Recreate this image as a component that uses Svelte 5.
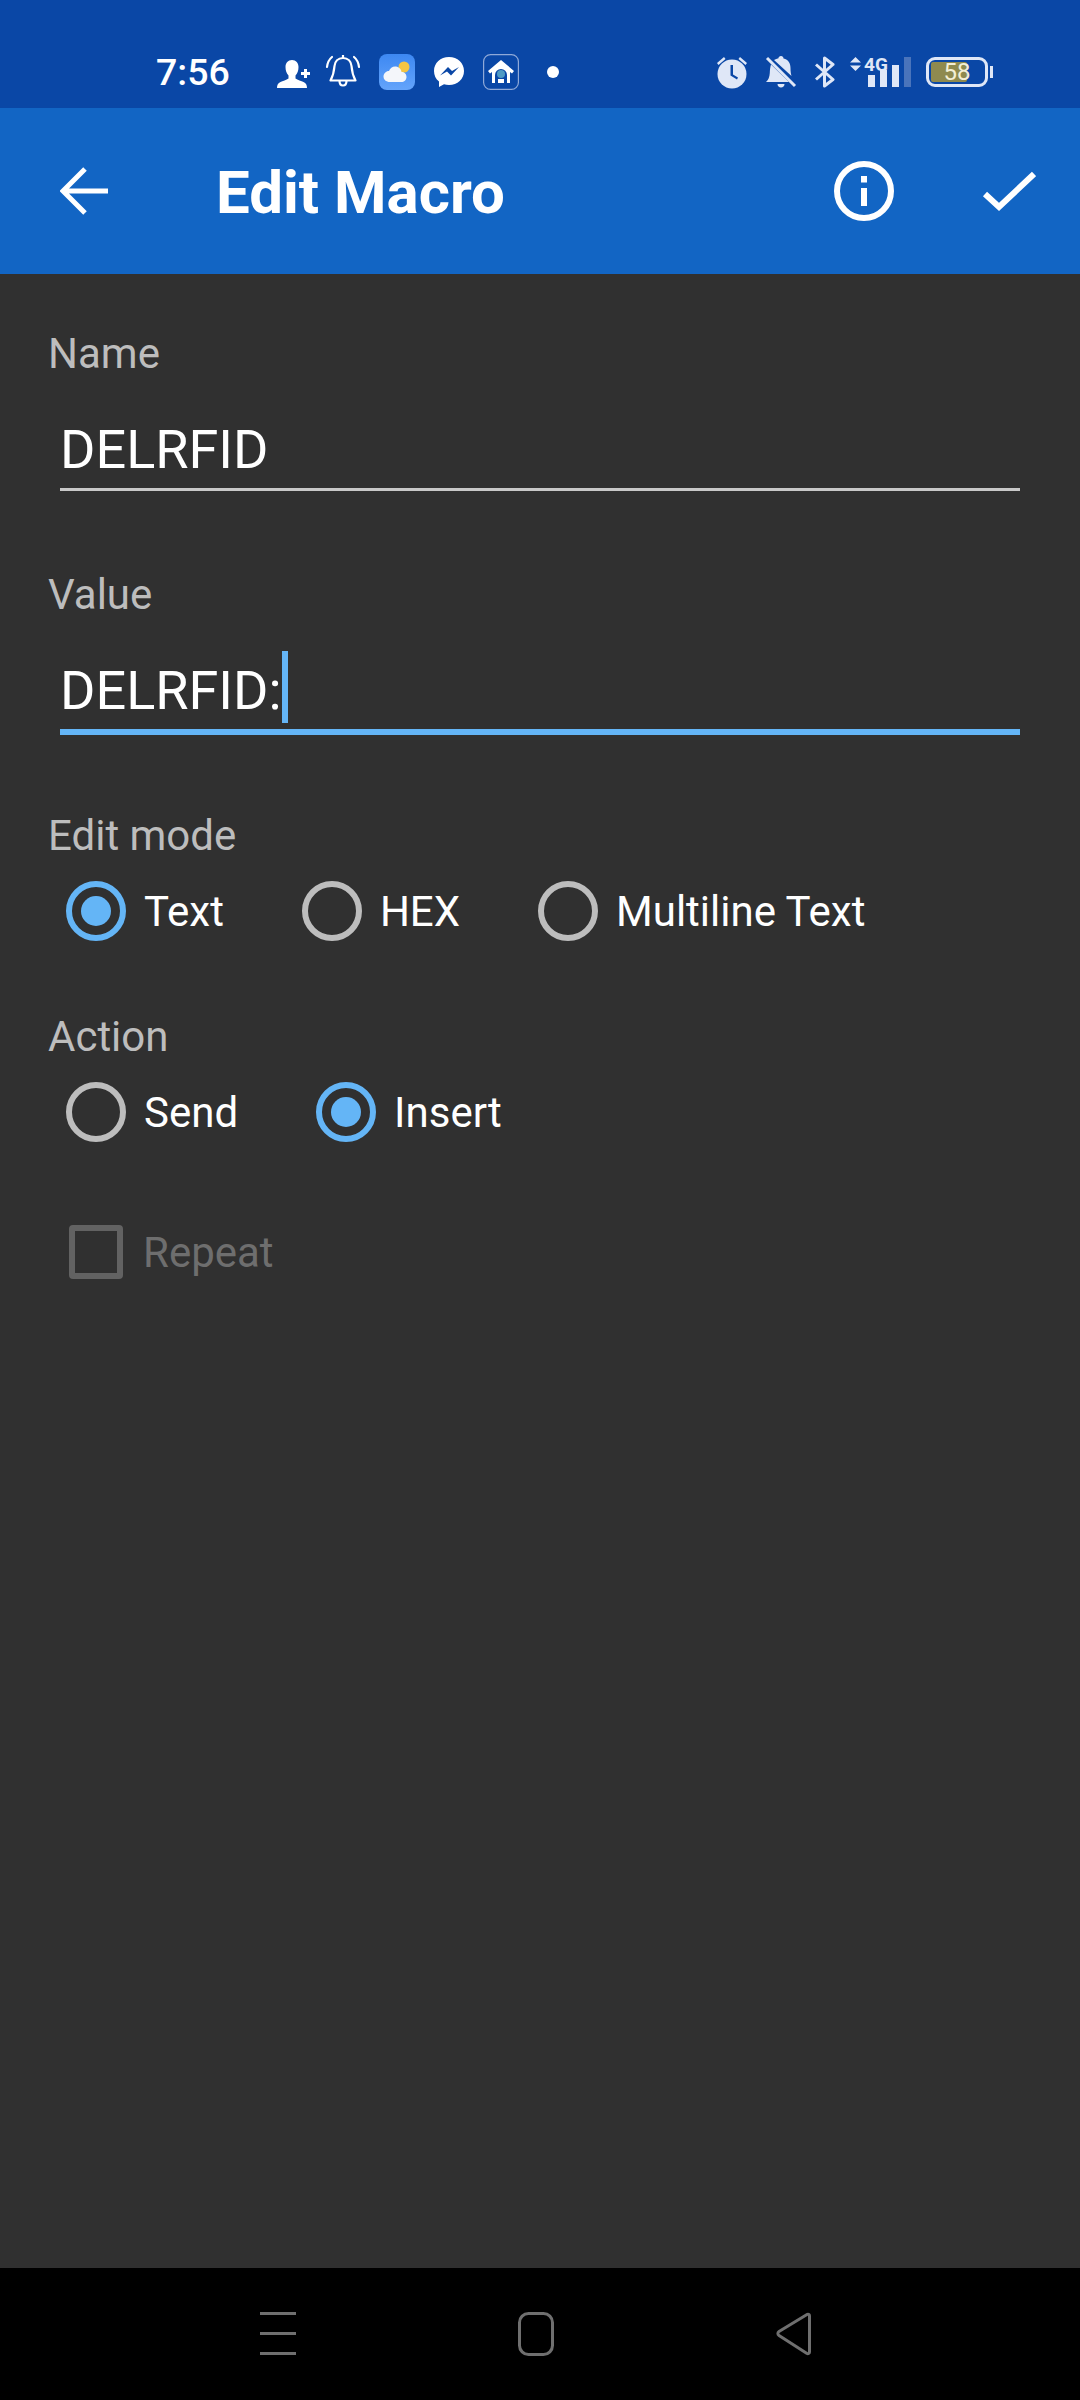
<script>
  const editModes = ['Text', 'HEX', 'Multiline Text'];
  const actions = ['Send', 'Insert'];
  let mode = 'Text';
  let action = 'Insert';
  let name = 'DELRFID';
  let value = 'DELRFID:';
</script>

<div class="screen">
  <div class="status">
    <span class="time">7:56</span>
    <div class="notifs">
      <svg class="person" width="34" height="30" viewBox="0 0 34 30" fill="#fff">
        <path d="M15 1c4 0 6.500 3 6.500 7 0 3.500-1 6.500-3 8.500v3c2 1.500 6 2.500 8 3.500 2.500 1 3.500 3 3.500 6H0c0-3 1-5 3.500-6 2-1 6-2 8-3.500v-3c-2-2-3-5-3-8.500 0-4 2.500-7 6.500-7z" />
        <rect x="27" y="10" width="3" height="9" />
        <rect x="24" y="13" width="9" height="3" />
      </svg>
      <svg class="bell" width="36" height="36" viewBox="0 0 36 36" fill="none" stroke="#fff" stroke-width="2.200">
        <path d="M18 1v3M18 4c-5 0-8 3.500-8.500 8-.4 5-1 9-4 14.500h25c-3-5.500-3.600-9.500-4-14.500C26 7.500 23 4 18 4zM14.500 27c0 6 7 6 7 0" stroke-linejoin="round" />
        <path d="M7 3C4 5.500 2.500 8.500 2 13M29 3c3 2.500 4.500 5.500 5 10" stroke-linecap="round" />
      </svg>
      <svg class="weather" width="36" height="36" viewBox="0 0 36 36">
        <defs>
          <linearGradient id="sky" x1="0" y1="0" x2="0" y2="1">
            <stop offset="0" stop-color="#3d88f2" />
            <stop offset="1" stop-color="#64a4fb" />
          </linearGradient>
        </defs>
        <rect width="36" height="36" rx="8" fill="url(#sky)" />
        <circle cx="25" cy="13" r="5.500" fill="#f5c542" />
        <path d="M11 28c-4 0-6.500-2.500-6.500-5.500S7 17 10 17c1-3 4-5 7-4.500 3 .5 5.500 3 5.500 5.500 3 0 5 2 5 5 0 3-2.500 5-5 5z" fill="#f4f6fa" />
      </svg>
      <svg class="msgr" width="32" height="32" viewBox="0 0 32 32">
        <path d="M16 1C7.500 1 1 7 1 15c0 4.300 1.800 8 5 10.500V31l5-2.800c1.600.5 3.200.8 5 .8 8.500 0 15-6 15-14S24.500 1 16 1z" fill="#fff" />
        <path d="M7 19.500l8-8.500 4 4 7-4-8 8.500-4-4z" fill="#0a47a6" />
      </svg>
      <svg class="homeapp" width="36" height="36" viewBox="0 0 36 36">
        <rect x=".6" y=".6" width="34.800" height="34.800" rx="7" fill="none" stroke="#8fa9d8" stroke-width="1.200" />
        <path d="M18 6L5 17l2 2.500 2-1.500v11h18V18l2 1.500 2-2.500z" fill="#fff" />
        <path d="M12 29v-8a6 6 0 0 1 12 0v8h-3v-4h-6v4z" fill="#0a47a6" />
        <circle cx="18" cy="20" r="4" fill="#4f9ac4" />
      </svg>
      <span class="dot"></span>
    </div>
    <div class="sysicons">
      <svg width="32" height="34" viewBox="0 0 32 34" fill="#dfe7f7">
        <circle cx="16" cy="19" r="14.500" />
        <path d="M14.500 10v10.500l6.500 4 1-2-5-3V10z" fill="#0a47a6" />
        <path d="M1 8l7-6 1.500 2-7 6zM31 8l-7-6-1.500 2 7 6z" />
      </svg>
      <svg width="32" height="34" viewBox="0 0 32 34" fill="#dfe7f7">
        <path d="M16 1c1.500 0 2.500 1 2.500 2.500 5 1 7 5 7 9.500 0 4 .5 6 1 8L9 5c1.500-1 3-1.500 4.500-1.800C13.500 2 14.500 1 16 1zM6 9.500L24 27H1c2.500-2 3.500-5 3.800-9 .1-3 .4-6 1.200-8.500zM12.500 29h7c0 2-1.500 3.500-3.500 3.500s-3.500-1.500-3.500-3.500z" />
        <path d="M2 3l28 28" stroke="#dfe7f7" stroke-width="3" />
      </svg>
      <svg width="22" height="32" viewBox="0 0 22 32" fill="none" stroke="#dfe7f7" stroke-width="3">
        <path d="M2 8.500l17 15L10.500 30V2L19 8.500l-17 15" stroke-linejoin="round" />
      </svg>
      <div class="signal">
        <svg class="updown" width="11" height="14" viewBox="0 0 11 14" fill="#dfe7f7">
          <path d="M5.500 0L11 5.500H0zM5.500 14L0 8.500h11z" />
        </svg>
        <span class="fourg">4G</span>
        <div class="bars">
          <i style="height:12px"></i>
          <i style="height:17px"></i>
          <i style="height:22px"></i>
          <i class="off" style="height:30px"></i>
        </div>
      </div>
      <div class="battery">
        <span class="fill"></span>
        <span class="level">58</span>
      </div>
      <span class="nub"></span>
    </div>
  </div>

  <header class="appbar">
    <svg class="back" width="48" height="48" viewBox="0 0 48 48" fill="none" stroke="#fff" stroke-width="5">
      <path d="M49 24H3M25 2L3 24l22 22" />
    </svg>
    <h1>Edit Macro</h1>
    <svg class="info" width="60" height="60" viewBox="0 0 60 60" fill="none">
      <circle cx="30" cy="30" r="27" stroke="#fff" stroke-width="6" />
      <rect x="27" y="15" width="6" height="6.500" fill="#fff" />
      <rect x="27" y="27" width="6" height="18" fill="#fff" />
    </svg>
    <svg class="check" width="54" height="42" viewBox="0 0 54 42" fill="none" stroke="#fff" stroke-width="6">
      <path d="M3 24l14 13L52 4" />
    </svg>
  </header>

  <main class="form">
    <div class="field">
      <span class="label">Name</span>
      <div class="input">{name}</div>
    </div>
    <div class="field second">
      <span class="label">Value</span>
      <div class="input focused">{value}<span class="caret"></span></div>
    </div>

    <div class="group mode">
      <span class="label">Edit mode</span>
      <div class="radios">
        {#each editModes as m}
          <button class="radio" class:on={mode === m} onclick={() => (mode = m)}>
            <span class="ring"></span>{m}
          </button>
        {/each}
      </div>
    </div>

    <div class="group action">
      <span class="label">Action</span>
      <div class="radios">
        {#each actions as a}
          <button class="radio" class:on={action === a} onclick={() => (action = a)}>
            <span class="ring"></span>{a}
          </button>
        {/each}
      </div>
    </div>

    <div class="repeat">
      <span class="box"></span>Repeat
    </div>
  </main>

  <nav class="navbar">
    <svg width="36" height="44" viewBox="0 0 36 44" fill="#6f6f6f">
      <rect y="0" width="36" height="3" />
      <rect y="20" width="36" height="3" />
      <rect y="40" width="36" height="3" />
    </svg>
    <svg width="36" height="44" viewBox="0 0 36 44" fill="none" stroke="#6f6f6f" stroke-width="3">
      <rect x="1.500" y="1.500" width="33" height="41" rx="9" />
    </svg>
    <svg width="36" height="44" viewBox="0 0 36 44" fill="none" stroke="#6f6f6f" stroke-width="3" stroke-linejoin="round">
      <path d="M33 2.500c-.5-.5-1.500-.5-2 0L3 19.500c-1.500 1-1.500 3 0 4l28 18c1 .5 2.500 0 2.500-1.500V4c0-.5 0-1-.5-1.500z" />
    </svg>
  </nav>
</div>

<style>
  :global(body) {
    margin: 0;
    background: #303030;
  }

  .screen {
    width: 1080px;
    height: 2400px;
    display: flex;
    flex-direction: column;
    font-family: Roboto, sans-serif;
    overflow: hidden;
  }

  /* status bar */
  .status {
    height: 108px;
    flex: none;
    background: #0a47a6;
    display: flex;
    align-items: center;
    padding: 36px 0 0 156px;
    box-sizing: border-box;
    color: #fff;
  }
  .time {
    font-size: 37.500px;
    font-weight: 500;
    width: 121px;
  }
  .notifs {
    display: flex;
    align-items: center;
    gap: 15px;
    width: 439px;
  }
  .person {
    margin-top: 3px;
  }
  .bell {
    margin-left: -1px;
  }
  .weather {
    margin-left: 3px;
  }
  .msgr {
    margin-left: 3px;
  }
  .homeapp {
    margin-left: 3px;
  }
  .dot {
    width: 12px;
    height: 12px;
    border-radius: 50%;
    background: #fff;
    margin-left: 13px;
  }
  .sysicons {
    display: flex;
    align-items: center;
    gap: 17px;
  }
  .signal {
    position: relative;
    width: 63px;
    height: 32px;
    margin-left: -3px;
  }
  .updown {
    position: absolute;
    left: 0;
    top: 1px;
  }
  .fourg {
    position: absolute;
    left: 14px;
    top: -3px;
    font-size: 19px;
    font-weight: 700;
    color: #dfe7f7;
  }
  .bars {
    position: absolute;
    left: 18px;
    bottom: 1px;
    display: flex;
    align-items: flex-end;
    gap: 5px;
  }
  .bars i {
    display: block;
    width: 7px;
    background: #dfe7f7;
  }
  .bars i.off {
    background: #4a74bb;
  }
  .battery {
    position: relative;
    width: 62px;
    height: 30px;
    border: 3px solid #dfe7f7;
    border-radius: 9px;
    box-sizing: border-box;
    margin-left: -4px;
  }
  .fill {
    position: absolute;
    left: 2px;
    top: 2px;
    bottom: 2px;
    width: 36px;
    background: #8f8a4f;
    border-radius: 2px;
  }
  .level {
    position: absolute;
    left: 0;
    right: 0;
    top: 0;
    text-align: center;
    font-size: 24px;
    line-height: 24px;
    color: #f3efd6;
  }
  .nub {
    width: 3px;
    height: 12px;
    background: #dfe7f7;
    margin-left: -15px;
  }

  /* app bar */
  .appbar {
    height: 166px;
    flex: none;
    background: #1265c4;
    display: flex;
    align-items: center;
    box-sizing: border-box;
    padding-left: 60px;
  }
  h1 {
    margin: 3px 0 0 108px;
    font-size: 60px;
    font-weight: 700;
    color: #fff;
    width: 618px;
  }
  .check {
    margin-left: 88px;
  }

  /* form */
  .form {
    flex: 1;
    background: #303030;
    padding: 56px 60px 0 48px;
    box-sizing: border-box;
  }
  .field.second {
    margin-top: 80px;
  }
  .label {
    display: block;
    font-size: 42px;
    line-height: 48px;
    color: #bdbdbd;
  }
  .input {
    margin: 38px 0 0 12px;
    height: 72px;
    line-height: 68px;
    font-size: 54px;
    color: #fff;
    border-bottom: 3px solid #c8c8c8;
    position: relative;
  }
  .input.focused {
    border-bottom: 6px solid #64b5f6;
    height: 72px;
  }
  .caret {
    display: inline-block;
    width: 6px;
    height: 72px;
    background: #64b5f6;
    vertical-align: top;
    margin-left: 0;
    margin-top: -6px;
  }
  .group.mode {
    margin-top: 77px;
  }
  .group.action {
    margin-top: 72px;
  }
  .radios {
    display: flex;
    margin: 21px 0 0 18px;
    gap: 78px;
  }
  .radio {
    all: unset;
    display: flex;
    align-items: center;
    gap: 18px;
    height: 60px;
    font-size: 42px;
    color: #fff;
  }
  .ring {
    width: 60px;
    height: 60px;
    box-sizing: border-box;
    border: 6px solid #bdbdbd;
    border-radius: 50%;
    position: relative;
  }
  .on .ring {
    border-color: #64b5f6;
  }
  .on .ring::after {
    content: '';
    position: absolute;
    left: 9px;
    top: 9px;
    width: 30px;
    height: 30px;
    border-radius: 50%;
    background: #64b5f6;
  }
  .repeat {
    display: flex;
    align-items: center;
    gap: 20px;
    margin: 83px 0 0 21px;
    font-size: 42px;
    color: #6e6e6e;
  }
  .box {
    width: 54px;
    height: 54px;
    box-sizing: border-box;
    border: 6px solid #626262;
    border-radius: 4px;
  }

  /* nav bar */
  .navbar {
    height: 132px;
    flex: none;
    background: #000;
    display: flex;
    align-items: center;
    padding: 0 268px 0 260px;
    box-sizing: border-box;
    justify-content: space-between;
  }
</style>
